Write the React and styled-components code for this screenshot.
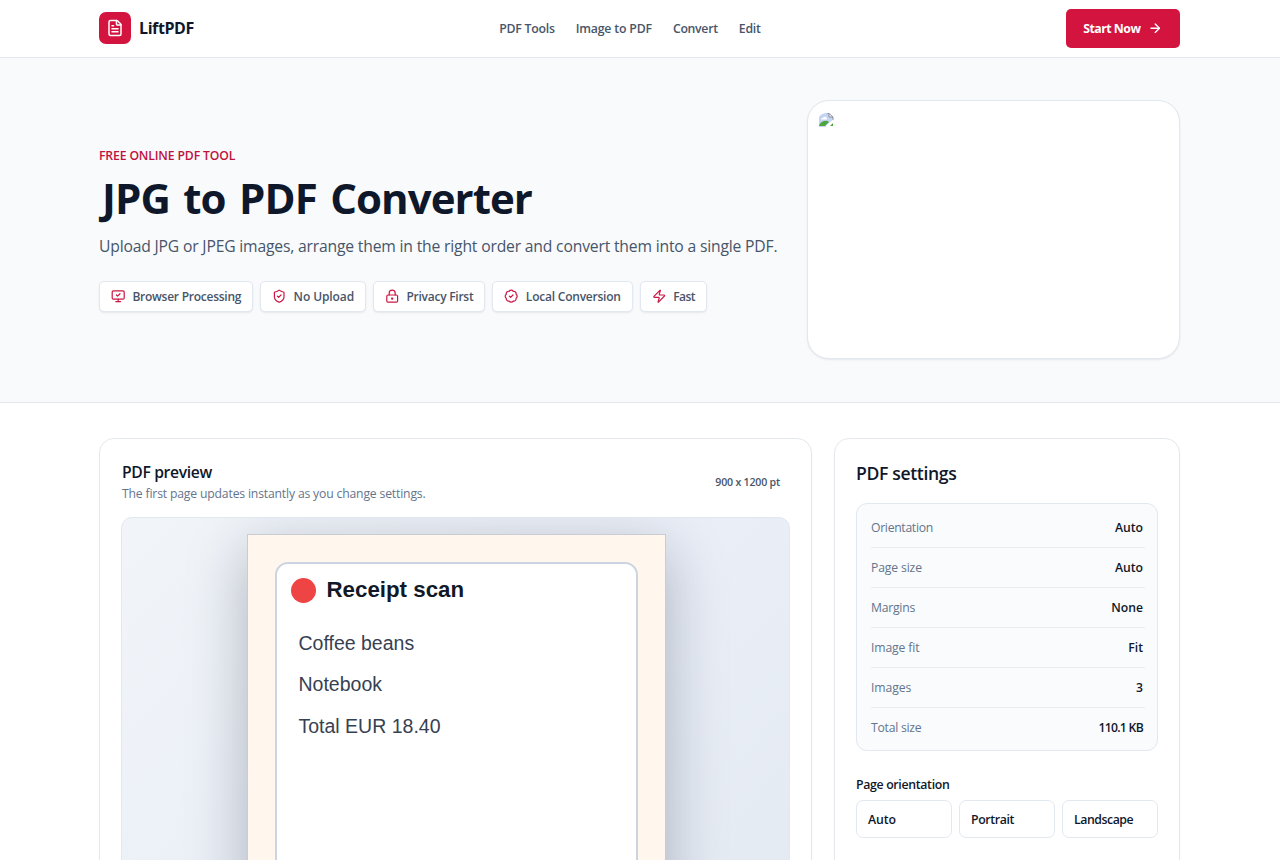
import styled, { createGlobalStyle } from "styled-components";
import {
  ArrowRight,
  BadgeCheck,
  FileText,
  LockKeyhole,
  MonitorCheck,
  ShieldCheck,
  Zap,
} from "lucide-react";

const GlobalStyle = createGlobalStyle`
  * {
    box-sizing: border-box;
  }

  body {
    margin: 0;
    height: 860px;
    overflow: hidden;
    background-color: #ffffff;
    color: #0f172a;
    font-family: "Open Sans", "Noto Sans", sans-serif;
  }

  h1, h2, p {
    margin: 0;
  }
`;

const Page = styled.div`
  height: 860px;
  overflow: hidden;
`;

const Container = styled.div`
  margin: 0 100px 0 99px;
`;

const Header = styled.header`
  height: 58px;
  border-bottom: 1px solid #e2e8f0;
`;

const HeaderInner = styled(Container)`
  display: flex;
  align-items: center;
  justify-content: space-between;
  height: 57px;
`;

const Brand = styled.div`
  display: flex;
  align-items: center;
  gap: 8px;
  margin-bottom: 1px;
`;

const BrandIcon = styled.span`
  display: flex;
  align-items: center;
  justify-content: center;
  width: 32px;
  height: 32px;
  border-radius: 7px;
  background-color: #d3143f;
  color: #ffffff;
`;

const Text = styled.span`
  white-space: nowrap;
  letter-spacing: ${(props) => props.$track || 0}px;
`;

const BrandName = styled(Text)`
  font-size: 16px;
  font-weight: 700;
`;

const Nav = styled.nav`
  display: flex;
  gap: 21px;
`;

const NavLink = styled(Text)`
  color: #475569;
  font-size: 12.3px;
  font-weight: 600;
`;

const StartButton = styled.button`
  display: flex;
  align-items: center;
  justify-content: center;
  gap: 8px;
  width: 114px;
  height: 39px;
  padding: 0;
  border: 0;
  border-radius: 5px;
  background-color: #d3143f;
  color: #ffffff;
  font-family: inherit;
  font-size: 12.3px;
  font-weight: 700;
`;

const Hero = styled.section`
  height: 345px;
  border-bottom: 1px solid #e2e8f0;
  background-color: #f8fafc;
`;

const HeroInner = styled(Container)`
  display: flex;
  align-items: center;
  justify-content: space-between;
  height: 343px;
`;

const Eyebrow = styled.p`
  color: #be123c;
  font-size: 12.2px;
  font-weight: 600;
  line-height: 18px;
  letter-spacing: -0.13px;
`;

const Title = styled.h1`
  margin-top: 6px;
  padding-left: 3px;
  font-size: 42px;
  font-weight: 700;
  line-height: 54px;
  letter-spacing: -0.95px;
  word-spacing: 3.5px;
  white-space: nowrap;
`;

const Lead = styled.p`
  margin-top: 7px;
  color: #475569;
  font-size: 15.7px;
  line-height: 28px;
  white-space: nowrap;
  letter-spacing: -0.18px;
`;

const Badges = styled.div`
  display: flex;
  gap: 7px;
  margin-top: 21px;
`;

const Badge = styled.div`
  display: flex;
  align-items: center;
  gap: 7px;
  height: 31px;
  padding: 0 11px;
  border: 1px solid #e2e8f0;
  border-radius: 5px;
  background-color: #ffffff;
  box-shadow: 0 1px 2px rgba(15, 23, 42, 0.08);
  color: #475569;
  font-size: 12px;
  font-weight: 600;

  svg {
    flex: none;
    color: #cb1643;
  }
`;

const HeroImage = styled.div`
  width: 373px;
  height: 259px;
  padding: 10px;
  border: 1px solid #e2e8f0;
  border-radius: 22px;
  background-color: #ffffff;
  box-shadow: 0 1px 2px rgba(15, 23, 42, 0.08);
`;

const Workspace = styled(Container)`
  display: grid;
  grid-template-columns: 713px 346px;
  gap: 22px;
  padding-top: 35px;
`;

const Panel = styled.section`
  height: 600px;
  padding: 21px;
  border: 1px solid #e5e9ef;
  border-radius: 15px;
  background-color: #ffffff;
  box-shadow: 0 1px 2px rgba(15, 23, 42, 0.05);
`;

const PreviewHead = styled.div`
  display: flex;
  align-items: center;
  justify-content: space-between;
  height: 57px;
  padding: 1px 10px 14px 1px;
`;

const PreviewTitle = styled.h2`
  font-size: 15.7px;
  font-weight: 600;
  line-height: 23px;
  letter-spacing: -0.35px;
`;

const PreviewNote = styled.p`
  color: #64748b;
  font-size: 12.2px;
  line-height: 19px;
  letter-spacing: -0.17px;
`;

const PageSize = styled(Text)`
  color: #475569;
  font-size: 10.6px;
  font-weight: 600;
`;

const PreviewArea = styled.div`
  display: flex;
  justify-content: center;
  height: 560px;
  padding-top: 16px;
  overflow: hidden;
  border: 1px solid #e2e8f0;
  border-radius: 11px;
  background-image: linear-gradient(135deg, #f1f5f9 0%, #e9eef7 50%, #e2e8f0 100%);
`;

const Sheet = styled.div`
  width: 419px;
  height: 558px;
  margin-left: 1px;
  padding: 27px;
  border: 1px solid #c9cdd3;
  background-color: #fff7ed;
  box-shadow: 0 16px 56px rgba(15, 23, 42, 0.28);
`;

const Receipt = styled.div`
  height: 502px;
  padding: 11px 14px;
  border: 2px solid #cbd5e1;
  border-radius: 13px;
  background-color: #ffffff;
  font-family: "Liberation Sans", Arial, sans-serif;
`;

const ReceiptTitle = styled.div`
  display: flex;
  align-items: center;
  gap: 11px;
  height: 30px;
  color: #111827;
  font-size: 22.3px;
  font-weight: 700;
`;

const Dot = styled.span`
  width: 25px;
  height: 25px;
  border-radius: 50%;
  background-color: #ef4444;
`;

const ReceiptLines = styled.div`
  display: flex;
  flex-direction: column;
  padding: 18px 0 0 8px;
  color: #374151;
  font-size: 19.5px;
  line-height: 41.4px;
`;

const SettingsTitle = styled.h2`
  font-size: 17.6px;
  font-weight: 600;
  line-height: 27px;
  letter-spacing: -0.35px;
`;

const Summary = styled.div`
  margin-top: 16px;
  padding: 4px 12px 2px 14px;
  border: 1px solid #e2e8f0;
  border-radius: 11px;
  background-color: #f9fbfd;
`;

const SummaryRow = styled.div`
  display: flex;
  align-items: center;
  justify-content: space-between;
  height: 40px;
  padding-right: 2px;
  border-bottom: 1px solid #e8ecf1;
  font-size: 12.2px;

  &:last-child {
    border-bottom-color: transparent;
  }
`;

const SummaryLabel = styled(Text)`
  color: #64748b;
`;

const SummaryValue = styled(Text)`
  font-weight: 600;
`;

const FieldLabel = styled.p`
  margin-top: 25px;
  font-size: 12.3px;
  font-weight: 600;
  line-height: 18px;
  letter-spacing: -0.32px;
`;

const Options = styled.div`
  display: grid;
  grid-template-columns: repeat(3, 1fr);
  gap: 7px;
  margin-top: 6px;
`;

const Option = styled.button`
  height: 38px;
  padding: 0 11px;
  border: 1px solid #e2e8f0;
  border-radius: 7px;
  background-color: #ffffff;
  color: #0f172a;
  font-family: inherit;
  font-size: 12.3px;
  font-weight: 600;
  text-align: left;
`;

const navLinks = [
  { label: "PDF Tools", track: -0.25 },
  { label: "Image to PDF", track: -0.18 },
  { label: "Convert", track: -0.3 },
  { label: "Edit", track: -0.2 },
];

const badges = [
  { label: "Browser Processing", icon: MonitorCheck, track: -0.25 },
  { label: "No Upload", icon: ShieldCheck, track: -0.1 },
  { label: "Privacy First", icon: LockKeyhole, track: -0.25 },
  { label: "Local Conversion", icon: BadgeCheck, track: -0.22 },
  { label: "Fast", icon: Zap, track: -0.5 },
];

const summary = [
  { label: "Orientation", value: "Auto", track: -0.3 },
  { label: "Page size", value: "Auto", track: -0.15 },
  { label: "Margins", value: "None", track: -0.25 },
  { label: "Image fit", value: "Fit", track: -0.12 },
  { label: "Images", value: "3", track: -0.1 },
  { label: "Total size", value: "110.1 KB", track: -0.25, valueTrack: -0.7 },
];

const orientations = [
  { label: "Auto", track: -0.1 },
  { label: "Portrait", track: -0.38 },
  { label: "Landscape", track: -0.45 },
];

function MissingImage() {
  return (
    <svg width="16" height="16" viewBox="0 0 16 16">
      <path d="M1 5Q3 1.5 8 1h3v4h4v4L8 15H1Z" fill="#c5d4f5" />
      <path d="M3 7.5Q3 6 5 6q1-2 3-1 1 .5 1 2.5Z" fill="#ffffff" />
      <path d="M1 14Q2 10 6 9q3-1 5 1l-4 4Z" fill="#4ca53f" />
      <path d="M12 14l3-3v3Z" fill="#4ca53f" />
      <path d="M9.5 1.5H11L15 5v4" fill="none" stroke="#8b8f96" />
      <path d="M11 1.5V5h4" fill="none" stroke="#8b8f96" />
      <path d="M8 14.5L15.5 8" fill="none" stroke="#ffffff" strokeWidth="1.5" />
    </svg>
  );
}

function App() {
  return (
    <Page>
      <GlobalStyle />
      <Header>
        <HeaderInner>
          <Brand>
            <BrandIcon>
              <FileText size={18} />
            </BrandIcon>
            <BrandName $track={-0.4}>LiftPDF</BrandName>
          </Brand>
          <Nav>
            {navLinks.map((link) => (
              <NavLink key={link.label} $track={link.track}>
                {link.label}
              </NavLink>
            ))}
          </Nav>
          <StartButton>
            <Text $track={-0.5}>Start Now</Text>
            <ArrowRight size={14.4} strokeWidth={2.3} />
          </StartButton>
        </HeaderInner>
      </Header>

      <Hero>
        <HeroInner>
          <div>
            <Eyebrow>FREE ONLINE PDF TOOL</Eyebrow>
            <Title>JPG to PDF Converter</Title>
            <Lead>
              Upload JPG or JPEG images, arrange them in the right order and
              convert them into a single PDF.
            </Lead>
            <Badges>
              {badges.map(({ label, icon: Icon, track }) => (
                <Badge key={label}>
                  <Icon size={14.4} />
                  <Text $track={track}>{label}</Text>
                </Badge>
              ))}
            </Badges>
          </div>
          <HeroImage>
            <MissingImage />
          </HeroImage>
        </HeroInner>
      </Hero>

      <Workspace>
        <Panel>
          <PreviewHead>
            <div>
              <PreviewTitle>PDF preview</PreviewTitle>
              <PreviewNote>
                The first page updates instantly as you change settings.
              </PreviewNote>
            </div>
            <PageSize $track={-0.2}>900 x 1200 pt</PageSize>
          </PreviewHead>
          <PreviewArea>
            <Sheet>
              <Receipt>
                <ReceiptTitle>
                  <Dot />
                  Receipt scan
                </ReceiptTitle>
                <ReceiptLines>
                  <span>Coffee beans</span>
                  <span>Notebook</span>
                  <span>Total EUR 18.40</span>
                </ReceiptLines>
              </Receipt>
            </Sheet>
          </PreviewArea>
        </Panel>

        <Panel>
          <SettingsTitle>PDF settings</SettingsTitle>
          <Summary>
            {summary.map((row) => (
              <SummaryRow key={row.label}>
                <SummaryLabel $track={row.track}>{row.label}</SummaryLabel>
                <SummaryValue $track={row.valueTrack}>{row.value}</SummaryValue>
              </SummaryRow>
            ))}
          </Summary>
          <FieldLabel>Page orientation</FieldLabel>
          <Options>
            {orientations.map((item) => (
              <Option key={item.label}>
                <Text $track={item.track}>{item.label}</Text>
              </Option>
            ))}
          </Options>
        </Panel>
      </Workspace>
    </Page>
  );
}

export default App;
